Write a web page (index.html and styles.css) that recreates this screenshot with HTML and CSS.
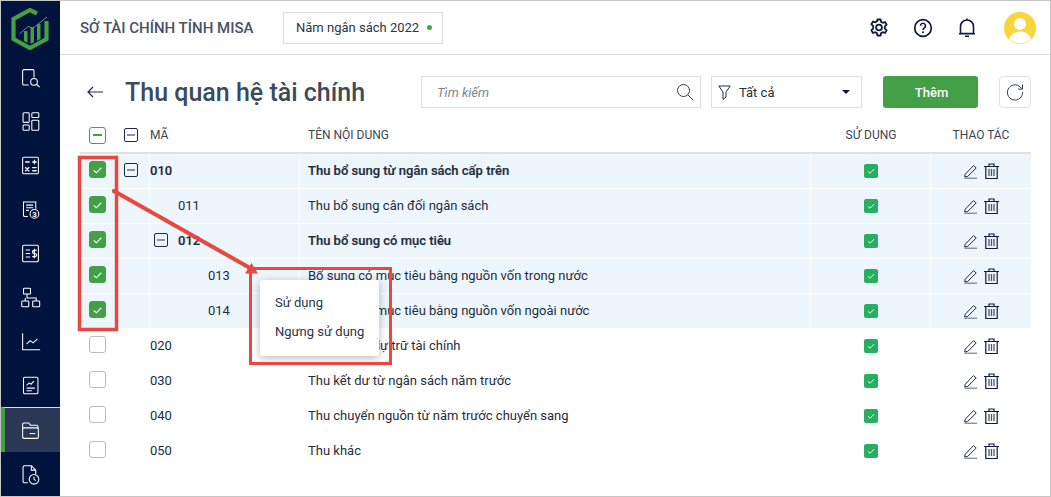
FILE: index.html
```html
<!DOCTYPE html>
<html lang="vi">
<head>
<meta charset="utf-8">
<title>Thu quan hệ tài chính</title>
<link rel="stylesheet" href="styles.css">
</head>
<body>
<svg class="defs" width="0" height="0">
  <symbol id="tick" viewBox="0 0 16 16"><path d="M4 8.400l2.800 2.600L12 5.600" fill="none" stroke="#fff" stroke-width="1.200"/></symbol>
  <symbol id="edit" viewBox="0 0 14 15"><path d="M1.200 10.200L9.600 1.600l2.600 2.400-8.500 8.400-3 .6z" fill="none" stroke="#1b2a4a" stroke-width="1"/><path d="M.5 14.200h12.500" stroke="#5b6680" stroke-width="1"/></symbol>
  <symbol id="trash" viewBox="0 0 15 16"><path d="M0 3.500h15M5 3.500V1h5v2.500M1.800 3.500v12h11.400v-12" fill="none" stroke="#0c1b3e" stroke-width="1.200"/><path d="M5 6v7M7.500 6v7M10 6v7" stroke="#4c566b" stroke-width="1.300"/></symbol>
</svg>
<div class="page">
  <nav class="side">
    <div class="logo">
      <svg width="38" height="42" viewBox="0 0 38 42"><path d="M26 5.500L19 2 2.500 11V31L19 40l16.500-9V13" fill="none" stroke="#43a047" stroke-width="4.200"/><path d="M13 33V23h3.500v12zM19.500 36V19.500H23V34zM26 33V16h3.500v15z" fill="#43a047"/><path d="M8.500 26L17 18.500l5 1.500L36 9" fill="none" stroke="#7c8b78" stroke-width="1"/></svg>
    </div>
    <div class="nav"><svg class="ni" viewBox="0 0 24 24"><path d="M10 20.500H4.500A1.500 1.500 0 0 1 3 19V4.500A1.500 1.500 0 0 1 4.500 3h10A1.500 1.500 0 0 1 16 4.500V12"/><circle cx="16" cy="17" r="3.800"/><path d="M19 20l3.500 3"/></svg></div>
    <div class="nav"><svg class="ni" viewBox="0 0 24 24"><rect x="3.500" y="2" width="7" height="11" rx="1"/><rect x="13.500" y="2" width="8" height="5.500" rx="1"/><rect x="3.500" y="16" width="7" height="6" rx="1"/><rect x="13.500" y="10.500" width="8" height="11.500" rx="1"/></svg></div>
    <div class="nav"><svg class="ni" viewBox="0 0 24 24"><rect x="3" y="2.500" width="18" height="19" rx="1.500"/><path d="M6 8h5M14 8h5M16.500 5.500v5M6 14l4.500 4.500M10.500 14L6 18.500M14 14.500h5M14 18h5" stroke-width="1.500"/></svg></div>
    <div class="nav"><svg class="ni" viewBox="0 0 24 24"><path d="M9 20H5.500A1.500 1.500 0 0 1 4 18.500V3.500h14V11M7 7h8M7 10h8M7 13h3"/><circle cx="16.500" cy="17" r="5"/><text class="ni-num" x="16.500" y="20">3</text></svg></div>
    <div class="nav"><svg class="ni" viewBox="0 0 24 24"><rect x="3" y="2.500" width="18" height="19" rx="1.500"/><path d="M6.500 8h5M6.500 12h5M6.500 16h5M19 8.500h-3a1.700 1.700 0 0 0 0 3.500h1.200a1.700 1.700 0 0 1 0 3.500H14M16.500 6.500v11" stroke-width="1.400"/></svg></div>
    <div class="nav"><svg class="ni" viewBox="0 0 24 24"><rect x="4" y="1.500" width="8" height="6.500" rx=".8"/><rect x="2" y="16" width="8" height="6.500" rx=".8"/><rect x="14.500" y="16" width="8" height="6.500" rx=".8"/><path d="M8 8v4.500H18.500V16M6 16v-3.500"/></svg></div>
    <div class="nav"><svg class="ni" viewBox="0 0 24 24"><path d="M3 2.500V21.500H23M7.500 15l4-4 3.500 2.500 5-4.500"/></svg></div>
    <div class="nav"><svg class="ni" viewBox="0 0 24 24"><rect x="4" y="2.500" width="16.500" height="19" rx="1.500"/><path d="M7.500 12l3-3 2 1.500 3.500-3.500M7.500 15h9.500M7.500 18h6"/></svg></div>
    <div class="nav active"><svg class="ni" viewBox="0 0 24 24"><path d="M3 10V5a1.500 1.500 0 0 1 1.500-1.500h5.500l2 2.500h7a1.500 1.500 0 0 1 1.500 1.500V10"/><rect x="3" y="9" width="18" height="12" rx="1.500"/><path d="M11 15.500h6.500"/></svg></div>
    <div class="nav"><svg class="ni" viewBox="0 0 24 24"><path d="M9 21.500H5A1.500 1.500 0 0 1 3.500 20V3.500A1.500 1.500 0 0 1 5 2h8l5 5v5M13 2v5h5"/><circle cx="16" cy="17.500" r="5.500"/><path d="M16 14.500v3l2 1.500"/></svg></div>
  </nav>
  <div class="main">
    <header class="top">
      <div class="org">SỞ TÀI CHÍNH TỈNH MISA</div>
      <div class="year">Năm ngân sách 2022<span class="dot"></span></div>
      <div class="top-icons">
        <svg class="ti" viewBox="0 0 20 20"><path d="M8.400 1.500h3.200l.5 2.400 1.600.9 2.300-.8 1.600 2.800-1.800 1.600v2.200l1.800 1.600-1.600 2.800-2.300-.8-1.600.9-.5 2.400H8.400l-.5-2.400-1.600-.9-2.300.8-1.600-2.800 1.800-1.600V7.900L2.400 6.300 4 3.500l2.300.8 1.600-.9z" fill="none" stroke="#0c1b3e" stroke-width="1.800" stroke-linejoin="round"/><circle cx="10" cy="9.500" r="2.900" fill="none" stroke="#0c1b3e" stroke-width="1.800"/></svg>
        <svg class="ti" viewBox="0 0 20 20"><circle cx="10" cy="10" r="8.300" fill="none" stroke="#0c1b3e" stroke-width="1.700"/><path d="M7.500 7.800a2.500 2.500 0 1 1 3.800 2.100c-.9.600-1.300 1-1.300 2" fill="none" stroke="#0c1b3e" stroke-width="1.600"/><circle cx="10" cy="14.300" r="1" fill="#0c1b3e"/></svg>
        <svg class="ti" viewBox="0 0 20 20"><path d="M3.500 15.500V8.500a6.500 6.500 0 0 1 13 0v7zM2 15.800h16M8 18.200h4" fill="none" stroke="#0c1b3e" stroke-width="1.600"/><path d="M10 .5v1.500" stroke="#0c1b3e" stroke-width="1.500"/></svg>
        <svg class="avatar" viewBox="0 0 32 32"><circle cx="16" cy="16" r="16" fill="#f6d63a"/><circle cx="16" cy="12" r="6" fill="#fff"/><path d="M5 27c2-6 7-7.500 11-7.500S25 21 27 27a16 16 0 0 1-22 0z" fill="#fff"/></svg>
      </div>
    </header>
    <section class="content">
      <div class="bar">
        <svg class="back" viewBox="0 0 16 12"><path d="M16 6H1M6 1L1 6l5 5" fill="none" stroke="#1f2d4d" stroke-width="1.200"/></svg>
        <h1 class="title">Thu quan hệ tài chính</h1>
        <div class="search"><span class="ph">Tìm kiếm</span><svg class="sic" viewBox="0 0 18 18"><circle cx="7.500" cy="7.500" r="6" fill="none" stroke="#333d4f" stroke-width="1"/><path d="M12 12l5 5" stroke="#333d4f" stroke-width="1"/></svg></div>
        <div class="filter"><svg class="fic" viewBox="0 0 13 15"><path d="M.8 1h11.400L8 7v5l-3 2.500V7z" fill="none" stroke="#1f2d4d" stroke-width="1"/></svg><span class="fval">Tất cả</span><span class="caret"></span></div>
        <div class="add">Thêm</div>
        <div class="refresh"><svg width="18" height="18" viewBox="0 0 18 18"><path d="M15.500 5.500A7.600 7.600 0 1 0 16.600 9" fill="none" stroke="#333d4f" stroke-width="1"/><path d="M16.500 1.500v4.600h-4.600" fill="none" stroke="#333d4f" stroke-width="1"/></svg></div>
      </div>

      <div class="thead">
        <div class="c1"><span class="cb partial"></span><span class="tree"></span></div>
        <div class="c2">MÃ</div>
        <div class="c3">TÊN NỘI DUNG</div>
        <div class="c4">SỬ DỤNG</div>
        <div class="c5">THAO TÁC</div>
      </div>

      <div class="row sel">
        <div class="c1"><span class="cb on"><svg><use href="#tick"/></svg></span><span class="tree"></span></div>
        <div class="c2 b">010</div>
        <div class="c3 b">Thu bổ sung từ ngân sách cấp trên</div>
        <div class="c4"><span class="use"><svg><use href="#tick"/></svg></span></div>
        <div class="c5"><svg class="ed"><use href="#edit"/></svg><svg class="tr"><use href="#trash"/></svg></div>
      </div>
      <div class="row sel">
        <div class="c1"><span class="cb on"><svg><use href="#tick"/></svg></span></div>
        <div class="c2 l1">011</div>
        <div class="c3">Thu bổ sung cân đối ngân sách</div>
        <div class="c4"><span class="use"><svg><use href="#tick"/></svg></span></div>
        <div class="c5"><svg class="ed"><use href="#edit"/></svg><svg class="tr"><use href="#trash"/></svg></div>
      </div>
      <div class="row sel">
        <div class="c1"><span class="cb on"><svg><use href="#tick"/></svg></span></div>
        <div class="c2 b l1t"><span class="tree"></span>012</div>
        <div class="c3 b">Thu bổ sung có mục tiêu</div>
        <div class="c4"><span class="use"><svg><use href="#tick"/></svg></span></div>
        <div class="c5"><svg class="ed"><use href="#edit"/></svg><svg class="tr"><use href="#trash"/></svg></div>
      </div>
      <div class="row sel">
        <div class="c1"><span class="cb on"><svg><use href="#tick"/></svg></span></div>
        <div class="c2 l2">013</div>
        <div class="c3">Bổ sung có mục tiêu bằng nguồn vốn trong nước</div>
        <div class="c4"><span class="use"><svg><use href="#tick"/></svg></span></div>
        <div class="c5"><svg class="ed"><use href="#edit"/></svg><svg class="tr"><use href="#trash"/></svg></div>
      </div>
      <div class="row sel">
        <div class="c1"><span class="cb on"><svg><use href="#tick"/></svg></span></div>
        <div class="c2 l2">014</div>
        <div class="c3">Bổ sung có mục tiêu bằng nguồn vốn ngoài nước</div>
        <div class="c4"><span class="use"><svg><use href="#tick"/></svg></span></div>
        <div class="c5"><svg class="ed"><use href="#edit"/></svg><svg class="tr"><use href="#trash"/></svg></div>
      </div>
      <div class="row">
        <div class="c1"><span class="cb"></span></div>
        <div class="c2">020</div>
        <div class="c3">Thu từ quỹ dự trữ tài chính</div>
        <div class="c4"><span class="use"><svg><use href="#tick"/></svg></span></div>
        <div class="c5"><svg class="ed"><use href="#edit"/></svg><svg class="tr"><use href="#trash"/></svg></div>
      </div>
      <div class="row">
        <div class="c1"><span class="cb"></span></div>
        <div class="c2">030</div>
        <div class="c3">Thu kết dư từ ngân sách năm trước</div>
        <div class="c4"><span class="use"><svg><use href="#tick"/></svg></span></div>
        <div class="c5"><svg class="ed"><use href="#edit"/></svg><svg class="tr"><use href="#trash"/></svg></div>
      </div>
      <div class="row">
        <div class="c1"><span class="cb"></span></div>
        <div class="c2">040</div>
        <div class="c3">Thu chuyển nguồn từ năm trước chuyển sang</div>
        <div class="c4"><span class="use"><svg><use href="#tick"/></svg></span></div>
        <div class="c5"><svg class="ed"><use href="#edit"/></svg><svg class="tr"><use href="#trash"/></svg></div>
      </div>
      <div class="row">
        <div class="c1"><span class="cb"></span></div>
        <div class="c2">050</div>
        <div class="c3">Thu khác</div>
        <div class="c4"><span class="use"><svg><use href="#tick"/></svg></span></div>
        <div class="c5"><svg class="ed"><use href="#edit"/></svg><svg class="tr"><use href="#trash"/></svg></div>
      </div>
    </section>
  </div>

  <div class="menu">
    <div class="mi">Sử dụng</div>
    <div class="mi">Ngưng sử dụng</div>
  </div>

  <svg class="notes" width="1051" height="497" viewBox="0 0 1051 497">
    <rect x="79.500" y="157.500" width="37" height="172" fill="none" stroke="#e8483f" stroke-width="3.500"/>
    <rect x="250.500" y="268.500" width="140" height="95" fill="none" stroke="#e8483f" stroke-width="3"/>
    <path d="M114 191L250 268" stroke="#e8483f" stroke-width="4"/>
    <circle cx="114" cy="191" r="2.200" fill="#e8483f"/>
    <path d="M251.500 263L258 273.500H245z" fill="#e8483f"/>
  </svg>
</div>
</body>
</html>
```
FILE: styles.css
```css
* { box-sizing: border-box; }
html, body { margin: 0; padding: 0; background: #fff; }
body { font-family: Roboto, "Noto Sans", sans-serif; font-size: 13px; color: #1f2d3d; }
.defs { display: block; height: 0; width: 0; overflow: hidden; position: absolute; }

.page { position: relative; width: 1051px; height: 497px; border: 1px solid #c6c6c6; display: flex; overflow: hidden; background: #fff; }

.side { width: 59px; flex: none; background: #00133c; display: flex; flex-direction: column; }
.logo { height: 55px; flex: none; display: flex; align-items: center; justify-content: center; padding-right: 2px; }
.nav { height: 43.9px; flex: none; display: flex; align-items: center; justify-content: center; }
.nav.active { height: 45px; background: #2a3856; border-top: 1px solid #d7dbe3; border-left: 4px solid #43a047; padding-right: 4px; }
.ni { width: 21px; height: 21px; fill: none; stroke: #fff; stroke-width: 1.200; }
.ni-num { font: 700 9px Roboto, sans-serif; fill: #fff; stroke: none; text-anchor: middle; }

.main { flex: 1; min-width: 0; display: flex; flex-direction: column; }
.top { height: 54px; flex: none; border-bottom: 1px solid #dcdcdc; display: flex; align-items: center; padding: 0 14px 0 20px; }
.org { font-size: 15px; font-weight: 500; color: #4a5263; width: 203px; white-space: nowrap; }
.year { width: 160px; height: 32px; border: 1px solid #dedede; display: flex; align-items: center; padding-left: 12px; font-size: 13px; color: #2b3445; }
.dot { width: 5px; height: 5px; border-radius: 50%; background: #2fb344; margin-left: 8px; }
.top-icons { margin-left: auto; display: flex; align-items: center; }
.ti { width: 20px; height: 20px; margin-right: 24px; }
.avatar { width: 32px; height: 32px; margin-left: 3px; }

.content { flex: 1; padding: 21px 19px 0 20px; }
.bar { display: flex; align-items: center; height: 32px; }
.back { width: 16px; height: 12px; margin-left: 7px; flex: none; }
.title { flex: 1; margin: 0 0 0 22px; font-size: 25px; font-weight: 500; color: #3d4a5c; white-space: nowrap; }
.search { width: 280px; height: 32px; border: 1px solid #e0e0e0; display: flex; align-items: center; justify-content: space-between; padding: 0 6px 0 15px; }
.ph { font-style: italic; color: #7d8590; font-size: 13px; }
.sic { width: 18px; height: 18px; }
.filter { width: 151px; height: 32px; margin-left: 10px; border: 1px solid #e0e0e0; display: flex; align-items: center; padding: 0 11px 0 6px; }
.fic { width: 13px; height: 15px; }
.fval { margin-left: 8px; flex: 1; color: #1f2d3d; }
.caret { width: 0; height: 0; border-left: 4.500px solid transparent; border-right: 4.500px solid transparent; border-top: 4.500px solid #0c1b3e; }
.add { width: 95px; height: 32px; margin-left: 21px; padding-left: 2px; background: #43a047; border-radius: 3px; color: #fff; font-weight: 500; display: flex; align-items: center; justify-content: center; }
.refresh { width: 32px; height: 32px; margin-left: 21px; border: 1px solid #e2e2e2; border-radius: 4px; display: flex; align-items: center; justify-content: center; }

.thead, .row { display: grid; grid-template-columns: 70px 150px 511px 120px 100px; }
.thead { height: 36px; margin-top: 10px; border-bottom: 2px solid #e2e2e2; font-size: 12px; color: #3b4656; }
.row { height: 35px; border-bottom: 1px solid #fff; }
.row.sel { background: #edf6fd; }
.c1, .c2, .c3, .c4, .c5 { display: flex; align-items: center; }
.row .c1 { padding-bottom: 3px; }
.row .c2, .row .c3 { padding-bottom: 2px; }
.row .c1, .row .c2, .row .c3, .row .c4 { border-right: 1px solid #fff; }
.c1 { padding-left: 9px; }
.c3 { padding-left: 8px; }
.c4, .c5 { justify-content: center; }
.row .b { font-weight: 500; -webkit-text-stroke: 0.2px currentColor; }
.l1 { padding-left: 28px; }
.l2 { padding-left: 58px; }
.l1t { padding-left: 4px; }
.l1t .tree { margin: 0 10px 0 0; }

.cb { width: 17px; height: 17px; flex: none; border: 1px solid #bcbcbc; border-radius: 3px; background: #fff; display: flex; align-items: center; justify-content: center; }
.cb svg { width: 16px; height: 16px; }
.cb.on { background: #43a047; border-color: #43a047; }
.cb.partial { border-color: #43a047; }
.cb.partial::after { content: ""; width: 9px; height: 2px; background: #43a047; }
.tree { width: 14px; height: 14px; flex: none; margin-left: 18px; border: 1px solid #1b2a4a; border-radius: 2px; display: flex; align-items: center; justify-content: center; }
.tree::after { content: ""; width: 8px; height: 2px; background: #8a93a5; }
.use { width: 14px; height: 14px; border-radius: 2px; background: #27ae60; display: flex; align-items: center; justify-content: center; }
.use svg { width: 12px; height: 12px; }
.ed { width: 14px; height: 15px; margin-right: 6px; }
.tr { width: 15px; height: 16px; }

.menu { position: absolute; left: 259px; top: 279px; width: 119px; height: 76px; padding-top: 8px; background: #fff; border-radius: 3px; box-shadow: 0 2px 8px rgba(0,0,0,.28); }
.mi { height: 29px; padding-left: 15px; display: flex; align-items: center; color: #2b3445; }
.notes { position: absolute; left: -1px; top: -1px; pointer-events: none; }
```
